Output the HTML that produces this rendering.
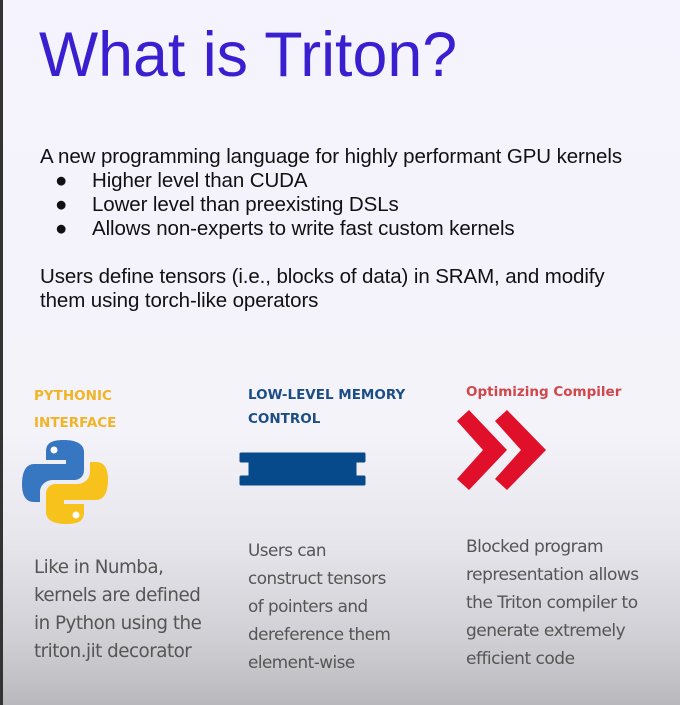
<!DOCTYPE html>
<html><head><style>
body{margin:0;width:680px;height:705px;overflow:hidden;position:relative;font-family:"Liberation Sans",sans-serif;
background:linear-gradient(#f5f3fd 0px,#f4f3fa 430px,#e6e6ec 540px,#cfcfd4 640px,#b9b9bd 705px);}
.edge{position:absolute;left:0;top:0;width:3px;height:705px;background:#333;}
.a{position:absolute;white-space:nowrap}
h1{position:absolute;left:39px;top:19px;margin:0;font-size:62.7px;font-weight:normal;color:#3a1fd1;}
.t{font-size:20.5px;color:#111;letter-spacing:-0.1px}
.b{position:absolute;left:-37px}
.h{font-family:"DejaVu Sans",sans-serif;font-weight:bold;font-size:13.5px;}
.d{font-family:"DejaVu Sans",sans-serif;font-size:18.3px;color:#555;line-height:28px;letter-spacing:-0.5px}
</style></head><body>
<div class="edge"></div>
<h1>What is Triton?</h1>
<div class="a t" style="left:40px;top:145px">A new programming language for highly performant GPU kernels</div>
<div class="a t" style="left:92px;top:169px"><span class="b">●</span>Higher level than CUDA</div>
<div class="a t" style="left:92px;top:193px"><span class="b">●</span>Lower level than preexisting DSLs</div>
<div class="a t" style="left:92px;top:217px"><span class="b">●</span>Allows non-experts to write fast custom kernels</div>
<div class="a t" style="left:40px;top:265px;line-height:24px">Users define tensors (i.e., blocks of data) in SRAM, and modify<br>them using torch-like operators</div>

<div class="a h" style="left:34px;top:383px;color:#f2b427;line-height:27px">PYTHONIC<br>INTERFACE</div>
<div class="a h" style="left:248px;top:383px;color:#1b4e86;line-height:24px">LOW-LEVEL MEMORY<br>CONTROL</div>
<div class="a h" style="left:466px;top:380px;color:#d0474b;line-height:24px">Optimizing Compiler</div>

<svg class="a" style="left:20px;top:438px" width="90" height="88" viewBox="0 0 90 88">
<path d="M44 2 C30 2 26 6 26 14 V22 H46 V26 H14 C6 26 2 34 2 46 C2 58 6 64 14 64 H20 V54 C20 47 26 42 33 42 H54 C60 42 64 38 64 32 V14 C64 6 56 2 44 2Z" fill="#3776c1"/>
<circle cx="34" cy="12" r="3.5" fill="#fff"/>
<path d="M46 86 C60 86 64 82 64 74 V66 H44 V62 H76 C84 62 88 54 88 42 C88 30 84 24 76 24 H70 V34 C70 41 64 46 57 46 H36 C30 46 26 50 26 56 V74 C26 82 34 86 46 86Z" fill="#f7c21b"/>
<circle cx="56" cy="77" r="3.5" fill="#fff"/>
</svg>

<svg class="a" style="left:239px;top:451px" width="128" height="36" viewBox="0 0 128 36">
<path d="M2 3 H125 V10 H116 V26 H125 V33 H2 V26 H11 V10 H2Z" fill="#064a8c" stroke="#064a8c" stroke-linejoin="round" stroke-width="3"/>
</svg>

<svg class="a" style="left:455px;top:407px" width="96" height="86" viewBox="0 0 96 86">
<polygon points="2,14 14,3 52,43 14,83 2,72 28,43" fill="#e0102a"/>
<polygon points="40,14 52,3 91,43 52,83 40,72 66,43" fill="#e0102a"/>
</svg>

<div class="a d" style="left:34px;top:554px">Like in Numba,<br>kernels are defined<br>in Python using the<br>triton.jit decorator</div>
<div class="a d" style="left:248px;top:536px;font-size:16.8px">Users can<br>construct tensors<br>of pointers and<br>dereference them<br>element-wise</div>
<div class="a d" style="left:466px;top:533px;font-size:17px">Blocked program<br>representation allows<br>the Triton compiler to<br>generate extremely<br>efficient code</div>
</body></html>
